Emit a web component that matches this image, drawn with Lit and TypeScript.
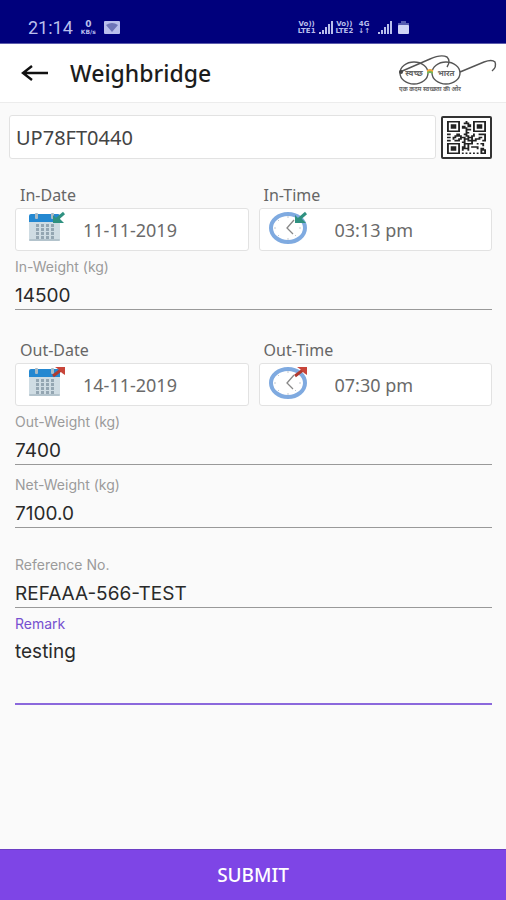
import { LitElement, html, css, svg } from "lit";
import { customElement, property } from "lit/decorators.js";

const QR_ROWS = [
  "111111100010001111111",
  "100000100111001000001",
  "101110100001101011101",
  "101110101101101011101",
  "101110101110001011101",
  "100000100011101000001",
  "111111100010001111111",
  "000000000011000000000",
  "110001100110001001111",
  "000011110011011000001",
  "110110011101110001101",
  "000100110111010111001",
  "110011100101111100011",
  "000000001100010000000",
  "111111100111110010110",
  "100000100101000000010",
  "101110101101011110000",
  "101110101111000010110",
  "101110101001000000111",
  "100000100000000000101",
  "111111101010101010111",
];

const qrPath = QR_ROWS.map((row, y) =>
  [...row].map((c, x) => (c === "1" ? `M${x} ${y}h1v1h-1z` : "")).join("")
).join("");

const inArrow = svg`
  <path d="M37 2 29 9" stroke="#2f9180" stroke-width="3" fill="none" />
  <path d="M26 4v8h11l-4-4-4-1z" fill="#2f9180" />`;
const outArrow = svg`
  <path d="M26 10 34 4" stroke="#b03a30" stroke-width="3" fill="none" />
  <path d="M28 1h10v8l-3-2-4-4z" fill="#c8453a" />`;

const calendarIcon = (direction: string) => html`
  <svg class="icon" viewBox="0 0 40 34" width="40" height="34" aria-hidden="true">
    <rect x="2" y="5" width="31" height="25" rx="2" fill="#cfdce3" />
    <rect x="2" y="28" width="31" height="2" rx="1" fill="#b3c3cc" />
    <path d="M2 11V5q0-2 2-2h27q2 0 2 2v6z" fill="#2488d1" />
    <rect x="8" y="2" width="3" height="6" rx="1" fill="#a9bac5" />
    <rect x="24" y="2" width="3" height="6" rx="1" fill="#a9bac5" />
    ${[14, 18, 22, 26].map((y) =>
      [9, 14, 19, 24].map((x) => svg`<rect x=${x} y=${y - 1} width="3" height="3" fill="#94a6b2" />`)
    )}
    ${direction === "in" ? inArrow : outArrow}
  </svg>`;

const clockIcon = (direction: string) => html`
  <svg class="icon" viewBox="0 0 40 34" width="40" height="34" aria-hidden="true">
    <ellipse cx="19" cy="17" rx="17" ry="14" fill="#fff" stroke="#7faae0" stroke-width="4" />
    <path d="M19 5v2M19 27v2M5 17h2M30 17h2M9 9l1 1M27 25l-1-1M9 25l1-1" stroke="#c3c8cd" />
    <path d="M25 9 18 17 24 23" fill="none" stroke="#888" stroke-width="1.3" />
    ${direction === "in" ? inArrow : outArrow}
  </svg>`;

const signalIcon = html`
  <svg viewBox="0 0 14 13" width="14" height="13" aria-hidden="true">
    <path d="M0 11h2v2H0zM3 9h2v4H3zM6 6h2v7H6zM9 3h2v10H9zM12 0h2v13h-2z" fill="#b9bfec" />
  </svg>`;

@customElement("stamp-field")
class StampField extends LitElement {
  @property() label = "";
  @property() value = "";
  @property() kind = "date";
  @property() direction = "in";

  static styles = css`
    :host { display: block; min-width: 0; }
    .caption {
      display: block; padding-left: 5px; height: 26px;
      font: 16px/26px "Noto Sans", sans-serif; color: #666;
    }
    .box {
      display: flex; align-items: center; box-sizing: border-box; height: 43px;
      padding: 0 8px 4px 11px; gap: 16px;
      background: #fff; border: 1px solid #e2e2e2; border-radius: 3px;
    }
    .icon { flex: none; display: block; }
    .time { padding-left: 9px; gap: 26px; }
    input {
      flex: 1; min-width: 0; padding: 4px 0 0; border: 0; outline: 0; background: none;
      font: 18px/24px "Noto Sans", sans-serif; color: #6a6a6a;
    }
  `;

  render() {
    return html`
      <label class="caption" for="value">${this.label}</label>
      <div class="box ${this.kind}">
        ${this.kind === "date" ? calendarIcon(this.direction) : clockIcon(this.direction)}
        <input id="value" type="text" .value=${this.value} />
      </div>`;
  }
}

@customElement("line-field")
class LineField extends LitElement {
  @property() label = "";
  @property() value = "";
  @property({ type: Boolean }) multiline = false;

  static styles = css`
    :host { display: block; }
    label {
      display: block; height: 20px;
      font: 14px/20px Inter, sans-serif; color: #9b9b9b;
    }
    label.active { color: #7650d0; }
    input, textarea {
      display: block; box-sizing: border-box; width: 100%; margin: 0;
      border: 0; border-bottom: 1px solid #999; border-radius: 0; outline: 0;
      background: none; color: #2a2a2a; font: 19px/24px Inter, sans-serif;
    }
    input { height: 33px; padding: 4px 0 0; }
    textarea { height: 71px; padding: 6px 0 0; resize: none; border-bottom: 2px solid #8b68dc; }
  `;

  render() {
    return this.multiline
      ? html`<label class="active" for="value">${this.label}</label>
          <textarea id="value" .value=${this.value}></textarea>`
      : html`<label for="value">${this.label}</label>
          <input id="value" type="text" .value=${this.value} />`;
  }
}

@customElement("app-root")
class AppRoot extends LitElement {
  static styles = css`
    :host {
      display: flex; flex-direction: column; min-height: 100vh;
      background: #fafafa; font-family: "Noto Sans", sans-serif;
    }
    .status {
      display: flex; justify-content: space-between; align-items: center; box-sizing: border-box;
      height: 44px; padding: 12px 97px 0 28px; background: #00007c; color: #b9bfec;
      border-bottom: 1px solid #5c5cac;
    }
    .group { display: flex; align-items: center; gap: 8px; }
    .signals { gap: 3px; }
    .clock { font: 18px/20px Roboto, sans-serif; }
    .stack {
      display: flex; flex-direction: column; align-items: center;
      font: bold 7px/7px "DejaVu Sans", sans-serif;
    }
    .speed { font-size: 9px; }
    .unit { font-size: 6px; }
    .data { padding: 0 5px 0 2px; }
    .battery { margin-left: 3px; }
    header {
      display: flex; align-items: center; box-sizing: border-box; height: 59px;
      padding: 0 8px 0 20px; background: #fff; border-bottom: 1px solid #ececec;
    }
    .back { padding: 0; border: 0; background: none; display: block; height: 30px; }
    svg { display: block; }
    h1 { margin: 0; padding-left: 20px; flex: 1; font: 500 23px/32px "Noto Sans", sans-serif; color: #1c1c1c; }
    .lookup { display: flex; gap: 5px; padding: 12px 14px 0 9px; }
    .vehicle {
      flex: 1; min-width: 0; box-sizing: border-box; height: 44px; padding: 0 6px;
      background: #fff; border: 1px solid #e2e2e2; border-radius: 3px; outline: 0;
      font: 20px/28px "Noto Sans", sans-serif; color: #444;
    }
    .scan {
      flex: none; width: 51px; height: 43px; margin-top: 1px; padding: 3px 4px;
      border: 2px solid #333; border-radius: 2px; background: #fff;
    }
    form { display: flex; flex-direction: column; flex: 1; }
    .fields { display: flex; flex-direction: column; gap: 27px; padding: 23px 14px 27px 15px; flex: 1; }
    .section { display: flex; flex-direction: column; gap: 6px; }
    .pair { display: grid; grid-template-columns: 1fr 1fr; gap: 10px; }
    .weights { display: flex; flex-direction: column; gap: 10px; }
    .submit {
      height: 51px; border: 0; border-top: 1px solid #6c3fc4; background: #7e45e6; color: #fff;
      font: 500 19px/28px "Noto Sans", sans-serif;
    }
  `;

  render() {
    return html`
      <div class="status">
        <div class="group">
          <span class="clock">21:14</span>
          <span class="stack"><span class="speed">0</span><span class="unit">KB/s</span></span>
          <svg viewBox="0 0 16 13" width="16" height="13" aria-hidden="true">
            <rect width="16" height="13" rx="1" fill="#b9bfec" />
            <path d="M2 4q6-4 12 0L8 11z" fill="#6d74b8" />
          </svg>
        </div>
        <div class="group signals">
          <span class="stack"><span>Vo))</span><span>LTE1</span></span>
          ${signalIcon}
          <span class="stack"><span>Vo))</span><span>LTE2</span></span>
          <span class="stack data"><span>4G</span><span>↓↑</span></span>
          ${signalIcon}
          <svg class="battery" viewBox="0 0 11 13" width="11" height="13" aria-hidden="true">
            <path d="M3 0h5v2h3v3H0V2h3z" fill="#555bb0" />
            <rect y="4" width="11" height="9" rx="1" fill="#d0d4f6" />
          </svg>
        </div>
      </div>
      <header>
        <button class="back" aria-label="Back">
          <svg viewBox="0 0 30 30" width="30" height="30">
            <path d="M28 15H4M12 8 3 15l9 7" fill="none" stroke="#111" stroke-width="2.4" />
          </svg>
        </button>
        <h1>Weighbridge</h1>
        <svg viewBox="0 0 100 42" width="100" height="42" role="img" aria-label="स्वच्छ भारत">
          <g fill="none" stroke="#555" stroke-width="1.4">
            <ellipse cx="16" cy="21" rx="14" ry="11" />
            <ellipse cx="48" cy="21" rx="14" ry="11" />
            <path d="M2 20 32 7Q43 2 49 5q4 4 0 10M62 20 86 10q8-3 11 0 2 5-3 9" />
          </g>
          <path d="M29 18q3-2 6 0v3q-3-2-6 0z" fill="#f0a63c" />
          <path d="M29 20q3-2 6 0v2q-3-2-6 0z" fill="#75b55a" />
          <circle cx="3" cy="20" r="2" fill="#444" />
          <g fill="#666" font-family="'Noto Sans', sans-serif" font-weight="bold" text-anchor="middle">
            <text x="16" y="24" font-size="8">स्वच्छ</text>
            <text x="48" y="24" font-size="8">भारत</text>
            <text x="32" y="39" font-size="6">एक कदम स्वच्छता की ओर</text>
          </g>
        </svg>
      </header>
      <form @submit=${(e: Event) => e.preventDefault()}>
        <div class="lookup">
          <input class="vehicle" type="text" aria-label="Vehicle number" .value=${"UP78FT0440"} />
          <button class="scan" type="button" aria-label="Scan QR code">
            <svg viewBox="0 0 21 21" width="39" height="33" preserveAspectRatio="none">
              <path d=${qrPath} fill="#222" />
            </svg>
          </button>
        </div>
        <div class="fields">
          <div class="section">
            <div class="pair">
              <stamp-field label="In-Date" value="11-11-2019" kind="date" direction="in"></stamp-field>
              <stamp-field label="In-Time" value="03:13 pm" kind="time" direction="in"></stamp-field>
            </div>
            <line-field label="In-Weight (kg)" value="14500"></line-field>
          </div>
          <div class="section">
            <div class="pair">
              <stamp-field label="Out-Date" value="14-11-2019" kind="date" direction="out"></stamp-field>
              <stamp-field label="Out-Time" value="07:30 pm" kind="time" direction="out"></stamp-field>
            </div>
            <div class="weights">
              <line-field label="Out-Weight (kg)" value="7400"></line-field>
              <line-field label="Net-Weight (kg)" value="7100.0"></line-field>
            </div>
          </div>
          <div class="section">
            <line-field label="Reference No." value="REFAAA-566-TEST"></line-field>
            <line-field label="Remark" value="testing" multiline></line-field>
          </div>
        </div>
        <button class="submit" type="submit">SUBMIT</button>
      </form>`;
  }
}
